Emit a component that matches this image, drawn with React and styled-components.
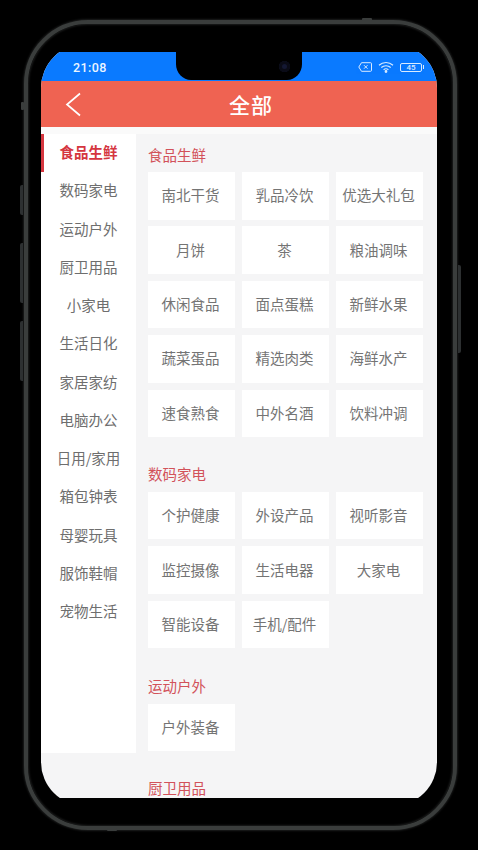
import React from "react";
import styled, { createGlobalStyle } from "styled-components";

const Global = createGlobalStyle`
  html, body { margin: 0; padding: 0; background: #000; }
  body { width: 478px; height: 850px; overflow: hidden; font-family: "Noto Sans CJK SC", "Roboto", sans-serif; }
`;
const Stage = styled.div`
  width: 478px; height: 850px; background: #000; display: flex; align-items: flex-start; padding-left: 24px; box-sizing: border-box; position: relative; overflow: hidden;
`;
const Phone = styled.div`
  box-sizing: border-box; flex: none; margin-top: 20px; width: 433px; height: 810px; padding: 30px 16px 30px 15px;
  border: 4px solid #3a3d3c; border-radius: 64px; background: #000; box-shadow: inset 0 0 2px 1px #1c1d1d, 0 0 2px 1px #1c1d1d; position: relative;
`;
const SideKey = styled.span`
  position: absolute; width: 3px; background: #2d3031; top: ${p => p.$top}px; height: ${p => p.$h}px;
  ${p => p.$right ? "right: -8px; border-radius: 0 2px 2px 0;" : "left: -8px; border-radius: 2px 0 0 2px;"}
`;
const Tick = styled.span`
  position: absolute; background: #3a3d3c; border-radius: 1px; left: ${p => p.$x}px; top: ${p => p.$y}px; width: ${p => p.$w}px; height: ${p => p.$h}px;
`;
const Screen = styled.div`
  width: 396px; height: 746px; margin: -2px 0 0 -2px; clip-path: inset(-8px 0 -8px 0 round 44px); overflow: hidden; background: #f5f5f6; position: relative; display: flex; flex-direction: column;
`;
const Notch = styled.div`
  position: absolute; left: 135px; top: 0; width: 126px; height: 28px; background: #000; border-radius: 0 0 15px 15px / 0 0 16px 16px; display: flex; align-items: center; justify-content: flex-end; padding-right: 12px; box-sizing: border-box;
`;
const Camera = styled.span`
  width: 11px; height: 11px; border-radius: 50%; background: #141833; box-shadow: inset 0 0 0 3px #0a0b16;
`;
const StatusBar = styled.div`
  height: 29px; flex: none; background: #0a7aff; color: #fff; display: flex; align-items: center; justify-content: space-between; padding: 1px 13px 0 32px; box-sizing: border-box;
`;
const Time = styled.span`
  font: 500 12.5px "Roboto", sans-serif; letter-spacing: .4px; opacity: .92;
`;
const StatusIcons = styled.div`
  display: flex; align-items: center; gap: 6px; opacity: .85;
`;
const Battery = styled.span`
  box-sizing: border-box; width: 22px; height: 9px; border: 1px solid #fff; border-radius: 2px; font: 500 8px/7px "Roboto", sans-serif; text-align: center; color: #fff; position: relative; margin-right: 2px;
  &::after { content: ""; position: absolute; right: -3px; top: 1.5px; width: 1.5px; height: 4px; background: #fff; }
`;
const Header = styled.header`
  height: 46px; flex: none; background: #ef6352; color: #fff; display: flex; align-items: center; justify-content: center; padding-left: 24px; box-sizing: border-box; position: relative;
`;
const BackIcon = styled.svg`
  position: absolute; left: 24px; top: 11px; width: 16px; height: 25px;
`;
const Title = styled.h1`
  margin: 0; font-size: 21px; font-weight: 500; line-height: 46px; letter-spacing: 1px;
`;
const Body = styled.div`
  flex: 1; min-height: 0; display: flex; align-items: flex-start; border-top: 7px solid #fafafa;
`;
const Sidebar = styled.nav`
  width: 95px; flex: none; height: 619px; background: #fff;
`;
const NavItem = styled.div`
  height: 38.25px; box-sizing: border-box; display: flex; align-items: center; justify-content: center; font-size: 14.5px; padding-bottom: 3px; padding-right: 3px;
  color: ${p => p.$active ? "#d5363f" : "#6e6e6e"}; font-weight: ${p => p.$active ? 700 : 400};
  border-left: 3px solid ${p => p.$active ? "#d5363f" : "transparent"};
`;
const Content = styled.main`
  flex: 1; min-width: 0; padding: 10.5px 14px 0 12px; box-sizing: border-box;
`;
const Section = styled.section`
  margin-bottom: ${p => p.$gap}px;
`;
const SectionTitle = styled.h2`
  margin: 0; height: 27.5px; font-size: 14.5px; line-height: 20px; font-weight: 400; color: #d2525a;
`;
const Grid = styled.div`
  display: grid; grid-template-columns: repeat(3, 87px); column-gap: 7px; row-gap: 6.9px;
`;
const Cell = styled.div`
  height: 47.5px; background: #fff; color: #747474; font-size: 14.5px; padding: 0 2px 2px 0; box-sizing: border-box; display: flex; align-items: center; justify-content: center; white-space: nowrap;
`;

const navItems = ["食品生鲜","数码家电","运动户外","厨卫用品","小家电","生活日化","家居家纺","电脑办公","日用/家用","箱包钟表","母婴玩具","服饰鞋帽","宠物生活"];
const sections = [
  { title: "食品生鲜", gap: 27.4, items: ["南北干货","乳品冷饮","优选大礼包","月饼","茶","粮油调味","休闲食品","面点蛋糕","新鲜水果","蔬菜蛋品","精选肉类","海鲜水产","速食熟食","中外名酒","饮料冲调"] },
  { title: "数码家电", gap: 28.2, items: ["个护健康","外设产品","视听影音","监控摄像","生活电器","大家电","智能设备","手机/配件"] },
  { title: "运动户外", gap: 26.5, items: ["户外装备"] },
  { title: "厨卫用品", gap: 0, items: [] },
];

export default function App() {
  return (
    <Stage>
      <Global />
      <Phone>
        <SideKey $top={161} $h={30} />
        <SideKey $top={219} $h={60} />
        <SideKey $top={297} $h={60} />
        <SideKey $right $top={241} $h={88} />
        <Tick $x={334} $y={-6} $w={10} $h={3} />
        <Tick $x={79} $y={804} $w={10} $h={3} />
        <Tick $x={-7} $y={78} $w={3} $h={8} />
        <Tick $x={426} $y={78} $w={3} $h={8} />
        <Screen>
          <StatusBar>
            <Time>21:08</Time>
            <StatusIcons>
              <svg width="14" height="10" viewBox="0 0 14 10" fill="none" stroke="#fff" strokeWidth="1"><path d="M3.500 .7H12.500a1 1 0 0 1 1 1v6.600a1 1 0 0 1-1 1H3.500L.8 5z"/><path d="M6 3.200l3.500 3.500M9.500 3.200L6 6.700"/></svg>
              <svg width="16" height="12" viewBox="0 0 16 12" fill="none" stroke="#fff" strokeWidth="1.2"><path d="M1 4.200C5 .6 11 .6 15 4.200"/><path d="M3.300 6.500C6 4.200 10 4.200 12.700 6.500"/><path d="M5.600 8.700C7 7.600 9 7.600 10.400 8.700"/><circle cx="8" cy="10.500" r=".8" fill="#fff"/></svg>
              <Battery>45</Battery>
            </StatusIcons>
          </StatusBar>
          <Header>
            <BackIcon viewBox="0 0 16 25" fill="none" stroke="#fff" strokeWidth="1.700"><path d="M15 1.500L2 12.500 15 23.500"/></BackIcon>
            <Title>全部</Title>
          </Header>
          <Body>
            <Sidebar>
              {navItems.map((n, i) => <NavItem key={n} $active={i === 0}>{n}</NavItem>)}
            </Sidebar>
            <Content>
              {sections.map(s => (
                <Section key={s.title} $gap={s.gap}>
                  <SectionTitle>{s.title}</SectionTitle>
                  <Grid>{s.items.map(c => <Cell key={c}>{c}</Cell>)}</Grid>
                </Section>
              ))}
            </Content>
          </Body>
          <Notch><Camera /></Notch>
        </Screen>
      </Phone>
    </Stage>
  );
}
